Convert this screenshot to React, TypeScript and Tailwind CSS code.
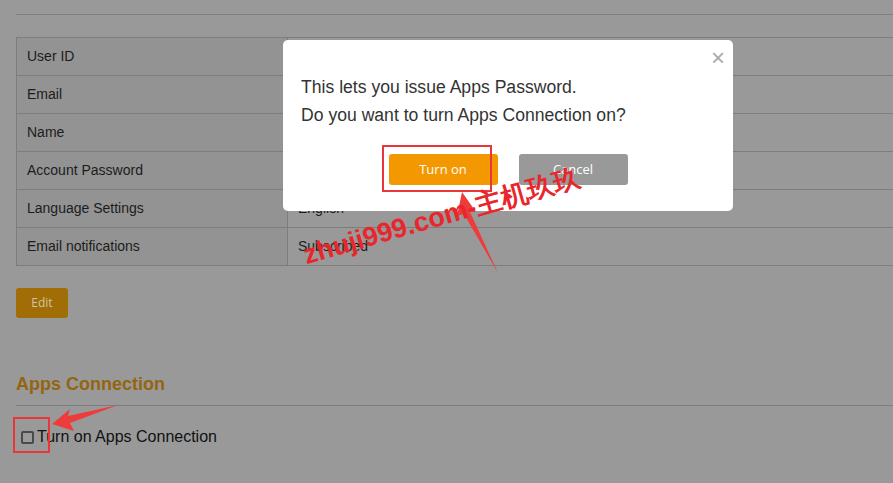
import React from "react";

const rows: [string, string][] = [
  ["User ID", ""],
  ["Email", ""],
  ["Name", ""],
  ["Account Password", ""],
  ["Language Settings", "English"],
  ["Email notifications", "Subscribed"],
];

const sans = "font-['Liberation_Sans',Arial,sans-serif]";
const btnFont = "font-['Open_Sans','Noto_Sans',sans-serif]";

export default function App() {
  return (
    <div className={`relative w-[893px] h-[483px] overflow-hidden bg-[#999999] ${sans}`}>
      {/* Page (dimmed by the modal backdrop) */}
      <div className="pl-4">
        <div className="h-[14px]" />
        <div className="border-t border-[#7d7d7d]" />

        {/* Account table */}
        <div className="mt-[22px] border-b border-l border-[#7d7d7d]">
          {rows.map(([label, value]) => (
            <div key={label} className="flex h-[38px] border-t border-[#7d7d7d]">
              <div className="w-[271px] shrink-0 flex items-center pl-[10px] bg-[#939393] border-r border-[#7d7d7d] text-[14px] text-[#1c1c1c]">
                {label}
              </div>
              <div className="flex-1 flex items-center pl-[10px] text-[14px] text-[#1c1c1c]">
                {value}
              </div>
            </div>
          ))}
        </div>

        <button
          className={`mt-[22px] w-[52px] h-[30px] rounded-[3px] bg-[#a06d06] text-[12px] text-[#d6c3a0] ${btnFont}`}
        >
          Edit
        </button>

        <h2 className="mt-[54px] text-[18px] font-bold text-[#946510] leading-[24px]">
          Apps Connection
        </h2>
        <div className="mt-[9px] border-t border-[#7d7d7d]" />

        <label className="mt-[19px] flex items-center gap-[3px] pl-[5px] text-[16px] text-[#111]">
          <span className="w-[13px] h-[13px] rounded-[2px] border-2 border-[#4a4a4a] bg-[#9a9a9a]" />
          Turn on Apps Connection
        </label>
      </div>

      {/* Modal */}
      <div className="absolute left-[283px] top-[40px] w-[450px] h-[171px] rounded-[5px] bg-white">
        <button className="absolute right-[8px] top-[6px] text-[24px] leading-none text-[#aaaaaa]">
          ×
        </button>
        <div className="pt-[33px] pl-[18px] text-[17.6px] leading-[28px] text-[#333]">
          <p>This lets you issue Apps Password.</p>
          <p>Do you want to turn Apps Connection on?</p>
        </div>
        <div className="mt-[25px] flex justify-center gap-[21px]">
          <button className={`w-[109px] h-[31px] rounded-[3px] bg-[#f39800] text-[13px] text-white ${btnFont}`}>
            Turn on
          </button>
          <button className={`w-[109px] h-[31px] rounded-[3px] bg-[#999999] text-[13px] text-white ${btnFont}`}>
            Cancel
          </button>
        </div>
      </div>

      {/* Annotations */}
      <div className="absolute left-[382px] top-[145px] w-[110px] h-[47px] border-2 border-[#e8363a]" />
      <div className="absolute left-[13px] top-[417px] w-[37px] h-[36px] border-2 border-[#e8363a]" />

      <svg className="absolute left-0 top-0" width="893" height="483">
        <polygon points="52,424 70,409 68,416 118,405 70,423 74,431" fill="#ee3b3b" />
        <polygon points="462,192 476,212 470,212 498,273 464,214 457,216" fill="#ee3b3b" />
      </svg>

      <div
        className={`absolute left-[292px] top-[203px] w-[300px] text-center text-[27px] font-bold leading-none text-[#e8262b] whitespace-nowrap -rotate-[16deg] ${sans}`}
      >
        zhuji999.com-主机玖玖
      </div>
    </div>
  );
}
